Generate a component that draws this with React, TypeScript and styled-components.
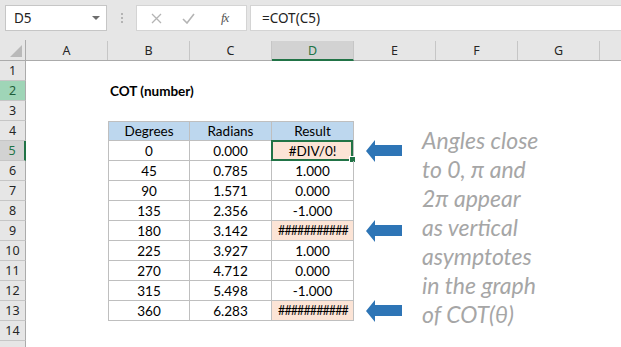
import React from 'react';
import styled, { createGlobalStyle, css } from 'styled-components';

const GlobalStyle = createGlobalStyle`
  html, body {
    margin: 0;
    padding: 0;
    background: #ffffff;
    overflow: hidden;
  }
`;

const Frame = styled.div`
  position: relative;
  width: 621px;
  height: 347px;
  overflow: hidden;
  background: #ffffff;
  font-family: 'Noto Sans', 'Liberation Sans', sans-serif;
`;

const FormulaBar = styled.div`
  display: flex;
  align-items: flex-start;
  height: 40px;
  padding: 5px 0 0 5px;
  box-sizing: border-box;
  background: #e6e6e6;
`;

const NameBox = styled.div`
  position: relative;
  display: flex;
  align-items: center;
  width: 102px;
  height: 26px;
  padding-left: 8px;
  box-sizing: border-box;
  background: #ffffff;
  border: 1px solid #c6c6c6;
  font-size: 13.5px;
  color: #222;
`;

const Caret = styled.span`
  position: absolute;
  right: 6px;
  top: 10px;
  border-left: 4px solid transparent;
  border-right: 4px solid transparent;
  border-top: 4px solid #6d6d6d;
`;

const Grip = styled.div`
  display: flex;
  flex-direction: column;
  gap: 2px;
  margin: 8px 13px 0 14px;

  span {
    width: 2px;
    height: 2px;
    background: #b4b4b4;
  }
`;

const FxBox = styled.div`
  display: flex;
  align-items: center;
  width: 111px;
  height: 26px;
  box-sizing: border-box;
  background: #ffffff;
  border: 1px solid #d4d4d4;
  padding-left: 14px;
  gap: 20px;
`;

const FxLabel = styled.span`
  margin-left: 6px;
  font-family: 'Liberation Serif', serif;
  font-style: italic;
  font-size: 13px;
  color: #555;
  letter-spacing: -1px;
`;

const FormulaInput = styled.div`
  flex: 1;
  display: flex;
  align-items: center;
  height: 26px;
  margin-left: 3px;
  padding-left: 11px;
  box-sizing: border-box;
  background: #ffffff;
  border: 1px solid #d4d4d4;
  border-right: none;
  font-size: 13.5px;
  color: #222;
`;

const Sheet = styled.div`
  position: relative;
`;

const HeaderRow = styled.div`
  display: flex;
  height: 21px;
  background: #e6e6e6;
  border-bottom: 1px solid #ababab;
  box-sizing: border-box;
`;

const Corner = styled.div`
  position: relative;
  width: 26px;
  flex: none;
  border-right: 1px solid #ababab;
  box-sizing: border-box;

  &::after {
    content: '';
    position: absolute;
    right: 3px;
    bottom: 3px;
    border-left: 12px solid transparent;
    border-bottom: 12px solid #b9b9b9;
  }
`;

const ColHeader = styled.div<{ $active?: boolean }>`
  width: 82px;
  flex: none;
  display: flex;
  align-items: center;
  justify-content: center;
  box-sizing: border-box;
  margin-top: 1px;
  border-right: 1px solid #c6c6c6;
  font-size: 12.5px;
  color: #262626;
  ${(p) =>
    p.$active &&
    css`
      background: #d2d2d2;
      color: #217346;
      border-bottom: 2px solid #217346;
      margin-bottom: -1px;
    `}
`;

const Row = styled.div`
  display: flex;
  height: 20px;
`;

const RowHeader = styled.div<{ $state?: 'active' | 'mark' }>`
  width: 26px;
  flex: none;
  display: flex;
  align-items: center;
  justify-content: center;
  box-sizing: border-box;
  background: #e6e6e6;
  border-right: 1px solid #ababab;
  border-bottom: 1px solid #c6c6c6;
  font-size: 12.5px;
  color: #262626;
  ${(p) =>
    p.$state === 'active' &&
    css`
      background: #d2d2d2;
      color: #217346;
      border-right: 2px solid #217346;
    `}
  ${(p) =>
    p.$state === 'mark' &&
    css`
      background: #9fd5b7;
      color: #1e5e3a;
    `}
`;

const Cell = styled.div<{
  $boxed?: boolean;
  $first?: boolean;
  $top?: boolean;
  $head?: boolean;
  $err?: boolean;
  $bold?: boolean;
  $selected?: boolean;
}>`
  position: relative;
  width: 82px;
  flex: none;
  display: flex;
  align-items: center;
  justify-content: ${(p) => (p.$boxed ? 'center' : 'flex-start')};
  padding-left: ${(p) => (p.$boxed ? '0' : '2px')};
  box-sizing: border-box;
  font-family: Lato, 'Liberation Sans', sans-serif;
  font-size: 13.5px;
  font-weight: ${(p) => (p.$bold ? 700 : 400)};
  color: #000;
  white-space: nowrap;
  ${(p) =>
    p.$boxed &&
    css`
      border-right: 1px solid #bfbfbf;
      border-bottom: 1px solid #bfbfbf;
    `}
  ${(p) => p.$first && 'border-left: 1px solid #bfbfbf;'}
  ${(p) => p.$top && 'border-top: 1px solid #bfbfbf;'}
  ${(p) => p.$head && 'background: #bdd7ee;'}
  ${(p) => p.$err && 'background: #fce4d6;'}
  ${(p) =>
    p.$selected &&
    css`
      &::before {
        content: '';
        position: absolute;
        inset: -1px 0 -1px -1px;
        border: 2px solid #217346;
      }
      &::after {
        content: '';
        position: absolute;
        right: -3px;
        bottom: -3px;
        width: 5px;
        height: 5px;
        background: #217346;
        border: 1px solid #ffffff;
      }
    `}
`;

const Hashes = styled.span`
  font-size: 12.5px;
  letter-spacing: -0.9px;
  margin-right: -1px;
`;

const ArrowMark = styled.svg<{ $top: number }>`
  position: absolute;
  left: 366px;
  top: ${(p) => p.$top}px;
  width: 36px;
  height: 22px;
`;

const Note = styled.div`
  position: absolute;
  left: 422px;
  top: 86px;
  font-family: Lato, 'Liberation Sans', sans-serif;
  font-style: italic;
  font-size: 23px;
  line-height: 29px;
  color: #a6a6a6;
  white-space: nowrap;
`;

const columns = ['A', 'B', 'C', 'D', 'E', 'F', 'G', ''];

type Line = { deg: string; rad: string; res: string; err?: boolean };

const data: Line[] = [
  { deg: '0', rad: '0.000', res: '#DIV/0!', err: true },
  { deg: '45', rad: '0.785', res: '1.000' },
  { deg: '90', rad: '1.571', res: '0.000' },
  { deg: '135', rad: '2.356', res: '-1.000' },
  { deg: '180', rad: '3.142', res: '###########', err: true },
  { deg: '225', rad: '3.927', res: '1.000' },
  { deg: '270', rad: '4.712', res: '0.000' },
  { deg: '315', rad: '5.498', res: '-1.000' },
  { deg: '360', rad: '6.283', res: '###########', err: true },
];

const noteLines = [
  'Angles close',
  'to 0, π and',
  '2π appear',
  'as vertical',
  'asymptotes',
  'in the graph',
  'of COT(θ)',
];

const Arrow = ({ top }: { top: number }) => (
  <ArrowMark $top={top} viewBox="0 0 36 22">
    <polygon points="0,11 9,0 9,5 36,5 36,16 9,16 9,22" fill="#2e75b6" />
  </ArrowMark>
);

const App = () => {
  return (
    <Frame>
      <GlobalStyle />
      <FormulaBar>
        <NameBox>
          D5
          <Caret />
        </NameBox>
        <Grip>
          <span />
          <span />
          <span />
        </Grip>
        <FxBox>
          <svg width="11" height="11" viewBox="0 0 11 11">
            <path d="M1 1 L10 10 M10 1 L1 10" stroke="#b4b4b4" strokeWidth="1.3" />
          </svg>
          <svg width="13" height="11" viewBox="0 0 13 11">
            <path d="M1 6 L5 10 L12 1" stroke="#b4b4b4" strokeWidth="1.6" fill="none" />
          </svg>
          <FxLabel>fx</FxLabel>
        </FxBox>
        <FormulaInput>=COT(C5)</FormulaInput>
      </FormulaBar>

      <Sheet>
        <HeaderRow>
          <Corner />
          {columns.map((c, i) => (
            <ColHeader key={i} $active={c === 'D'}>
              {c}
            </ColHeader>
          ))}
        </HeaderRow>

        <Row>
          <RowHeader>1</RowHeader>
        </Row>
        <Row>
          <RowHeader $state="mark">2</RowHeader>
          <Cell />
          <Cell $bold>COT (number)</Cell>
        </Row>
        <Row>
          <RowHeader>3</RowHeader>
        </Row>
        <Row>
          <RowHeader>4</RowHeader>
          <Cell />
          <Cell $boxed $first $top $head>
            Degrees
          </Cell>
          <Cell $boxed $top $head>
            Radians
          </Cell>
          <Cell $boxed $top $head>
            Result
          </Cell>
        </Row>
        {data.map((d, i) => (
          <Row key={d.deg}>
            <RowHeader $state={i === 0 ? 'active' : undefined}>{i + 5}</RowHeader>
            <Cell />
            <Cell $boxed $first>
              {d.deg}
            </Cell>
            <Cell $boxed>{d.rad}</Cell>
            <Cell $boxed $err={d.err} $selected={i === 0}>
              {d.res.startsWith('##') ? <Hashes>{d.res}</Hashes> : d.res}
            </Cell>
          </Row>
        ))}
        <Row>
          <RowHeader>14</RowHeader>
        </Row>
        <Row>
          <RowHeader />
        </Row>

        <Arrow top={100} />
        <Arrow top={180} />
        <Arrow top={260} />
        <Note>
          {noteLines.map((l) => (
            <div key={l}>{l}</div>
          ))}
        </Note>
      </Sheet>
    </Frame>
  );
};

export default App;
